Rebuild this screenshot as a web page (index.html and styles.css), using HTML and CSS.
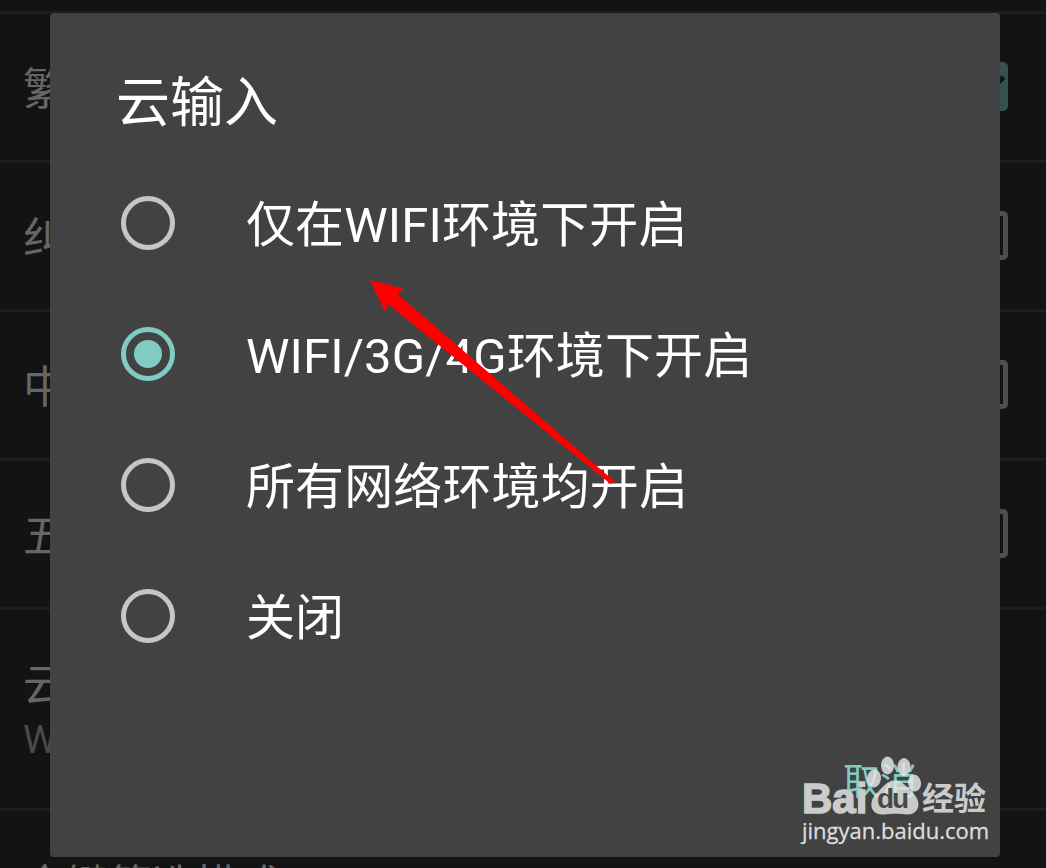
FILE: index.html
```html
<!DOCTYPE html>
<html lang="zh-CN">
<head>
  <meta charset="UTF-8" />
  <meta name="viewport" content="width=device-width, initial-scale=1.0"/>
  <title>云输入</title>
  <link rel="stylesheet" href="styles.css">
</head>
<body>

  <!-- Settings list behind the dialog -->
  <div class="settings">
    <div class="row"><span>繁</span><i class="check checked"></i></div>
    <div class="row"><span>纠</span><i class="check"></i></div>
    <div class="row"><span>中</span><i class="check"></i></div>
    <div class="row"><span>五</span><i class="check"></i></div>
    <div class="row tall">
      <span>云</span>
      <small>W</small>
    </div>
    <div class="row last"><span>全键筛选模式</span></div>
  </div>

  <!-- Dialog -->
  <div class="dialog">
    <h1>云输入</h1>
    <ul class="options">
      <li><i class="radio"></i><span>仅在WIFI环境下开启</span></li>
      <li><i class="radio selected"></i><span>WIFI/3G/4G环境下开启</span></li>
      <li><i class="radio"></i><span>所有网络环境均开启</span></li>
      <li><i class="radio"></i><span>关闭</span></li>
    </ul>
    <button class="cancel">取消</button>
  </div>

  <!-- Arrow -->
  <svg class="arrow" width="246" height="206" viewBox="0 0 246 206">
    <path d="M0 0 L34.500 9 L27 13.500 L243.500 200.500 Q243.500 204.500 240 203.500 L18 24 L15 32 Z" fill="#f00"/>
  </svg>

  <!-- Watermark -->
  <div class="watermark">
    <div class="brand">
      <span class="bai">Bai</span>
      <svg class="paw" width="56" height="60" viewBox="0 0 56 60">
        <ellipse cx="9" cy="22.500" rx="7" ry="9" transform="rotate(8 9 22.500)"/>
        <ellipse cx="22.500" cy="9.500" rx="6.500" ry="9"/>
        <ellipse cx="39" cy="11" rx="6.500" ry="9"/>
        <ellipse cx="49.500" cy="27" rx="6.500" ry="8.500" transform="rotate(-8 49.500 27)"/>
        <path d="M29 24.500 C37 24.500 41 30 47 36 C58 46 54 59 42 58.500 C35 57.500 26 57.500 19 58.500 C5 59.500 3 46 11 38 C18 31 22 24.500 29 24.500 Z"/>
      </svg>
      <span class="du">du</span>
      <span class="jingyan">经验</span>
    </div>
    <div class="url">jingyan.baidu.com</div>
  </div>

</body>
</html>
```

FILE: styles.css
```css
* {
  box-sizing: border-box;
}
body {
  margin: 0;
  height: 868px;
  overflow: hidden;
  background-color: #131313;
  color: white;
  font-family: Roboto, 'Noto Sans CJK SC', sans-serif;
}
.settings {
  height: 868px;
  padding-top: 11px;
  overflow: hidden;
  color: #666;
  font-size: 44px;
}
.row {
  display: flex;
  align-items: center;
  justify-content: space-between;
  height: 149px;
  padding: 6px 38px 0 23px;
  border-top: 3px solid #1d1d1d;
  line-height: 50px;
  white-space: nowrap;
}
.row.tall {
  flex-direction: column;
  align-items: flex-start;
  justify-content: center;
  height: 201px;
  padding-top: 11px;
}
.row.last {
  align-items: flex-start;
  height: 57px;
  padding-top: 50px;
  font-size: 43px;
}
.row small {
  color: #4a4a4a;
  font-size: 38px;
  line-height: 58px;
}
.check {
  width: 49px;
  height: 49px;
  margin-top: -8px;
  border: 5px solid #4f4f4f;
  border-radius: 5px;
}
.check.checked {
  position: relative;
  border-color: #34534f;
  background-color: #34534f;
}
.check.checked::after {
  content: '';
  position: absolute;
  left: 2px;
  top: 6px;
  width: 32px;
  height: 17px;
  border-left: 5px solid #131313;
  border-bottom: 5px solid #131313;
  transform: rotate(-45deg);
}
.dialog {
  position: absolute;
  left: 50px;
  top: 13px;
  width: 950px;
  height: 844px;
  padding: 51px 66px;
  border-radius: 4px;
  background-color: #424242;
}
h1 {
  margin: 0;
  font-size: 54px;
  font-weight: 400;
  line-height: 80px;
}
.options {
  margin: 13px 0 0;
  padding: 0;
  list-style: none;
}
.options li {
  display: flex;
  align-items: center;
  gap: 71px;
  height: 131px;
  padding-left: 5px;
  font-size: 49px;
  line-height: 60px;
  letter-spacing: .12px;
}
.options span {
  padding-top: 7px;
}
.radio {
  flex: none;
  width: 54px;
  height: 54px;
  border: 5px solid #c6c6c6;
  border-radius: 50%;
}
.radio.selected {
  padding: 8px;
  border-color: #80cbc4;
  background: #80cbc4 content-box;
}
.cancel {
  display: block;
  margin: 77px 17px 0 auto;
  padding: 0;
  border: none;
  background: none;
  color: #80cbc4;
  font-family: inherit;
  font-size: 37px;
  line-height: 50px;
}
.arrow {
  position: absolute;
  left: 370px;
  top: 280px;
}
.watermark {
  position: absolute;
  left: 802px;
  top: 756px;
  width: 190px;
  color: #cbcbcb;
}
.brand {
  position: relative;
  height: 60px;
}
.brand span {
  position: absolute;
  white-space: nowrap;
}
.brand .bai {
  left: 0;
  top: 23px;
  font: bold 42px/40px 'Liberation Sans', sans-serif;
  -webkit-text-stroke: 1.5px #cbcbcb;
}
.brand .paw {
  position: absolute;
  left: 63px;
  top: 0;
  fill: #e6e6e6;
  fill-opacity: .82;
}
.brand .du {
  left: 75px;
  top: 27px;
  color: #484848;
  font: bold 28px/32px 'Liberation Sans', sans-serif;
  letter-spacing: -2px;
}
.brand .jingyan {
  left: 120px;
  top: 23px;
  font-size: 32px;
  font-weight: 700;
  line-height: 40px;
}
.url {
  color: #ddd;
  font: 22px/28px 'Open Sans', sans-serif;
  -webkit-text-stroke: .3px #ddd;
}
```
